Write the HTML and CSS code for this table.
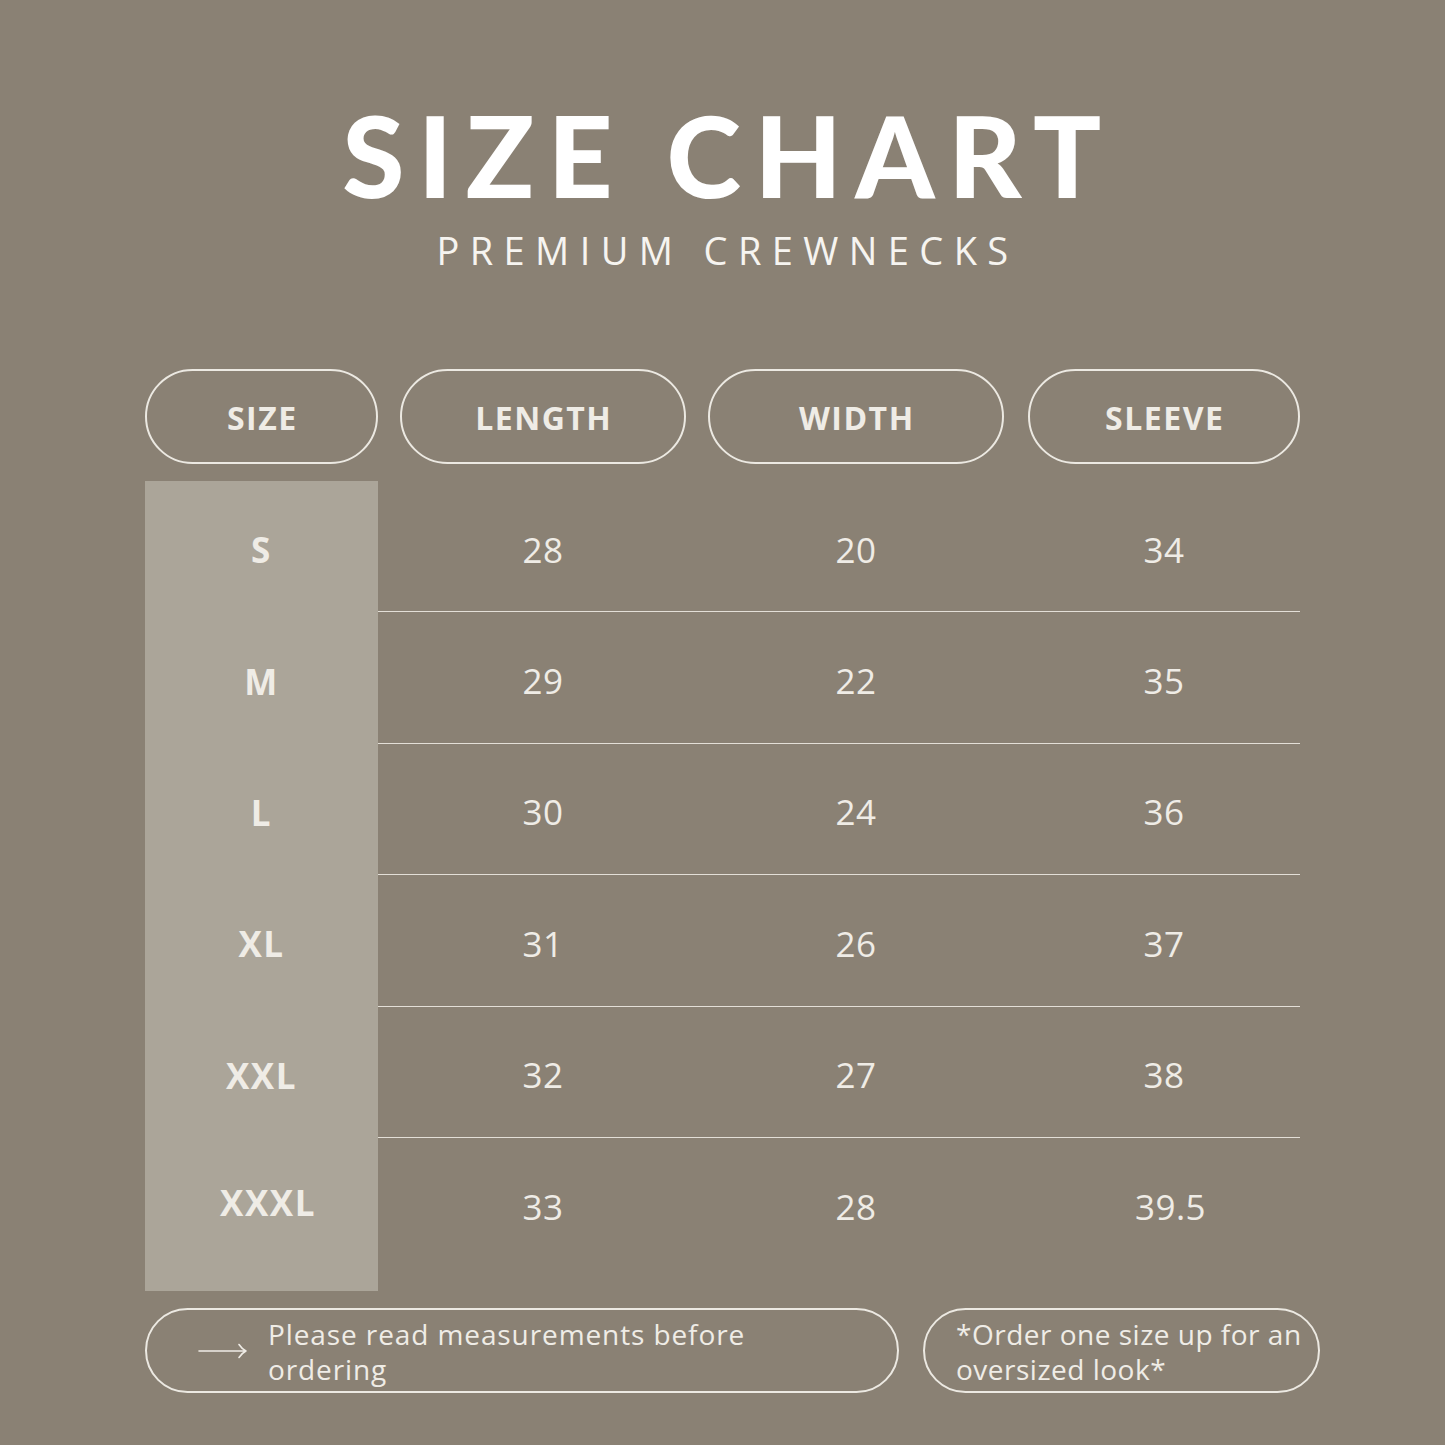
FILE: index.html
```html
<!DOCTYPE html>
<html>
<head>
<meta charset="utf-8">
<link rel="stylesheet" href="styles.css">
</head>
<body>
<main class="page">
  <header class="head">
    <h1 class="title">SIZE CHART</h1>
    <p class="subtitle">PREMIUM CREWNECKS</p>
  </header>

  <section class="chart">
    <div class="cols labels">
      <div class="pill">SIZE</div>
      <div class="pill">LENGTH</div>
      <div class="pill">WIDTH</div>
      <div class="pill">SLEEVE</div>
    </div>

    <div class="table">
      <div class="cols row"><div class="size">S</div><div class="val">28</div><div class="val">20</div><div class="val">34</div></div>
      <div class="cols row"><div class="size">M</div><div class="val">29</div><div class="val">22</div><div class="val">35</div></div>
      <div class="cols row"><div class="size">L</div><div class="val">30</div><div class="val">24</div><div class="val">36</div></div>
      <div class="cols row"><div class="size">XL</div><div class="val">31</div><div class="val">26</div><div class="val">37</div></div>
      <div class="cols row"><div class="size">XXL</div><div class="val">32</div><div class="val">27</div><div class="val">38</div></div>
      <div class="cols row last"><div class="size shift">XXXL</div><div class="val">33</div><div class="val">28</div><div class="val shift">39.5</div></div>
    </div>
  </section>

  <footer class="notes">
    <div class="note note-left">
      <svg class="arrow" width="50" height="18" viewBox="0 0 50 18" aria-hidden="true">
        <path d="M1 9 H48 M41 2.5 Q44 7 48 9 Q44 11 41 15.5" fill="none" stroke="#efece6" stroke-width="1.6" stroke-linecap="round" stroke-linejoin="round"/>
      </svg>
      <p>Please read measurements before<br>ordering</p>
    </div>
    <div class="note note-right">
      <p>*Order one size up for an<br>oversized look*</p>
    </div>
  </footer>
</main>
</body>
</html>
```

FILE: styles.css
```css
* { box-sizing: border-box; }

html, body {
  margin: 0;
  padding: 0;
  background: #8a8174;
}

body {
  font-family: "Open Sans", "Noto Sans", sans-serif;
  color: #efece6;
}

.page {
  width: 1445px;
  height: 1445px;
  padding-top: 98px;
}

.head {
  text-align: center;
}

.title {
  margin: 0;
  font-family: "Lato", "Open Sans", sans-serif;
  font-size: 113px;
  line-height: 113px;
  font-weight: 900;
  color: #ffffff;
  letter-spacing: 13.5px;
  padding-left: 12px;
}

.subtitle {
  margin: 20px 0 0;
  font-size: 38px;
  line-height: 38px;
  font-weight: 400;
  letter-spacing: 10.4px;
  padding-left: 10px;
  color: #f6f4f0;
}

.chart {
  margin: 100px 0 0 145px;
  width: 1155px;
}

.cols {
  display: grid;
  grid-template-columns: 233px 286px 296px 274px;
  column-gap: 22px;
}

.cols > :nth-child(4) { margin-left: 2px; }

.pill {
  height: 95px;
  border: 2px solid #ece9e2;
  border-radius: 48px;
  display: flex;
  align-items: center;
  justify-content: center;
  font-size: 32px;
  font-weight: 700;
  letter-spacing: 1.5px;
  padding-left: 1.5px;
  color: #efece6;
  padding-top: 2px;
}

.table {
  margin-top: 17px;
}

.row {
  height: 131.4px;
  border-bottom: 1px solid #e3dfd7;
  font-size: 35px;
  padding-top: 6px;
}

.row.last {
  height: 153px;
  border-bottom: none;
  padding-top: 0;
  padding-bottom: 15px;
}

.row > div {
  display: flex;
  align-items: center;
  justify-content: center;
}

.size {
  background: #aba599;
  font-weight: 700;
  letter-spacing: 1.5px;
  margin-top: -6px;
  padding-top: 6px;
  margin-bottom: -1px;
}

.row.last .size {
  margin-top: 0;
  margin-bottom: -15px;
  padding-top: 0;
  padding-bottom: 23px;
}

.val {
  font-weight: 400;
  letter-spacing: 0.5px;
}

.shift { padding-left: 13px; }

.notes {
  margin: 17px 0 0 145px;
  width: 1175px;
  display: flex;
  gap: 24px;
}

.note {
  height: 85px;
  border: 2px solid #ece9e2;
  border-radius: 43px;
  display: flex;
  align-items: center;
  font-size: 28px;
  line-height: 35px;
  letter-spacing: 0.9px;
  padding-top: 4px;
}

.note p { margin: 0; }

.note-left {
  width: 754px;
  padding-left: 51px;
}

.arrow {
  margin-right: 20px;
  flex: none;
  margin-top: -2px;
}

.note-right {
  width: 397px;
  padding-left: 31px;
  letter-spacing: 0.5px;
}
```
